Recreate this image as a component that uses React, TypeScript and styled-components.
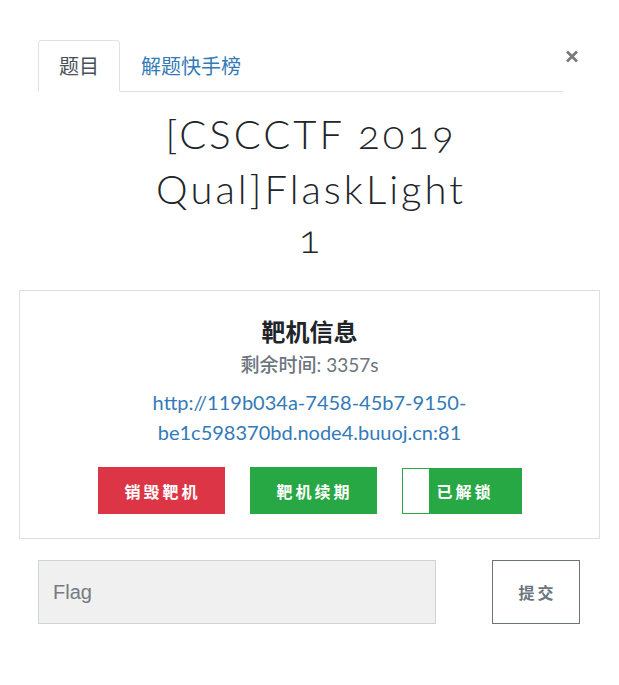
import { createGlobalStyle, styled } from 'styled-components';

const GlobalStyle = createGlobalStyle`
  * {
    box-sizing: border-box;
  }

  body {
    margin: 0;
    background: #fff;
    font-family: Lato, 'Noto Sans CJK SC', sans-serif;
    color: #212529;
  }
`;

const Modal = styled.div`
  width: 619px;
  padding-top: 40px;
  padding-bottom: 60px;
`;

const Header = styled.div`
  display: flex;
  align-items: flex-start;
  padding: 0 40px 0 38px;
`;

const Tabs = styled.div`
  flex: 1;
  display: flex;
  border-bottom: 1px solid #dee2e6;
`;

const Tab = styled.a<{ $active?: boolean }>`
  height: 52px;
  margin-bottom: -1px;
  padding: 0 20px;
  border: 1px solid transparent;
  border-radius: 4px 4px 0 0;
  font-size: 20px;
  line-height: 50px;
  text-decoration: none;
  cursor: pointer;
  color: ${p => (p.$active ? '#495057' : '#337ab7')};
  background: ${p => (p.$active ? '#fff' : 'transparent')};
  border-color: ${p => (p.$active ? '#dee2e6 #dee2e6 #fff' : 'transparent')};
`;

const Close = styled.button`
  display: flex;
  width: 14px;
  height: 13px;
  margin: 10px 0 0 2px;
  padding: 0;
  border: none;
  background: transparent;
  color: #7a7a7a;
  cursor: pointer;
`;

const Title = styled.h1`
  margin: 15px 0 0;
  padding: 0 37px 0 40px;
  font-size: 40px;
  font-weight: 300;
  line-height: 55px;
  letter-spacing: 3px;
  text-align: center;
  font-variant-numeric: oldstyle-nums;
`;

const Points = styled.div`
  padding-left: 3px;
  font-size: 40px;
  font-weight: 300;
  line-height: 42px;
  letter-spacing: 3px;
  text-align: center;
  font-variant-numeric: oldstyle-nums;
`;

const Card = styled.section`
  margin: 31px 19px 0;
  padding: 22px 20px 24px;
  border: 1px solid #dfdfdf;
  text-align: center;
`;

const CardTitle = styled.h4`
  margin: 0;
  font-size: 24px;
  font-weight: 700;
  line-height: 38px;
`;

const Timer = styled.div`
  font-size: 19px;
  line-height: 28px;
  color: #6c757d;
`;

const TimerLabel = styled.span`
  font-weight: 500;
`;

const Url = styled.a`
  display: block;
  margin-top: 8px;
  font-size: 20px;
  line-height: 30px;
  color: #337ab7;
  text-decoration: none;
`;

const Actions = styled.div`
  display: flex;
  justify-content: center;
  gap: 25px;
  margin-top: 20px;
`;

const ActionButton = styled.button<{ $tone: 'danger' | 'success' }>`
  width: 127px;
  height: 47px;
  padding: 0 0 0 3px;
  border: none;
  background: ${p => (p.$tone === 'danger' ? '#dc3545' : '#28a745')};
  color: #fff;
  font-family: inherit;
  font-size: 16px;
  font-weight: 700;
  letter-spacing: 3px;
  cursor: pointer;
`;

const LockButton = styled.button`
  display: flex;
  align-items: stretch;
  width: 120px;
  height: 46px;
  margin-top: 1px;
  padding: 0;
  border: 1px solid #28a745;
  background: #28a745;
  color: #fff;
  font-family: inherit;
  font-size: 16px;
  font-weight: 700;
  letter-spacing: 3px;
  cursor: pointer;
`;

const LockKnob = styled.span`
  width: 26px;
  background: #fff;
`;

const LockLabel = styled.span`
  display: flex;
  align-items: center;
  padding-left: 8px;
`;

const FlagForm = styled.form`
  display: flex;
  justify-content: space-between;
  margin-top: 21px;
  padding: 0 39px 0 38px;
`;

const FlagInput = styled.input`
  width: 398px;
  height: 64px;
  padding: 0 14px;
  border: 1px solid #ced4da;
  background: #f0f0f0;
  font-family: 'Liberation Sans', Arial, sans-serif;
  font-size: 20px;
  color: #495057;

  &::placeholder {
    color: #757b80;
  }

  &:focus {
    outline: none;
  }
`;

const SubmitButton = styled.button`
  width: 88px;
  height: 64px;
  padding: 0 0 0 3px;
  border: 1px solid #6c757d;
  background: #fff;
  color: #6c757d;
  font-family: inherit;
  font-size: 16px;
  font-weight: 700;
  letter-spacing: 3px;
  cursor: pointer;
`;

export default function App() {
  return (
    <>
      <GlobalStyle />
      <Modal>
        <Header>
          <Tabs>
            <Tab $active>题目</Tab>
            <Tab>解题快手榜</Tab>
          </Tabs>
          <Close aria-label="Close">
            <svg width="14" height="13" viewBox="0 0 14 13">
              <path d="M2 1.5 L12 11.5 M12 1.5 L2 11.5" stroke="currentColor" strokeWidth="2.8" strokeLinecap="butt" />
            </svg>
          </Close>
        </Header>

        <Title>[CSCCTF 2019 Qual]FlaskLight</Title>
        <Points>1</Points>

        <Card>
          <CardTitle>靶机信息</CardTitle>
          <Timer>
            <TimerLabel>剩余时间</TimerLabel>: 3357s
          </Timer>
          <Url href="#">http://119b034a-7458-45b7-9150-be1c598370bd.node4.buuoj.cn:81</Url>
          <Actions>
            <ActionButton $tone="danger">销毁靶机</ActionButton>
            <ActionButton $tone="success">靶机续期</ActionButton>
            <LockButton>
              <LockKnob />
              <LockLabel>已解锁</LockLabel>
            </LockButton>
          </Actions>
        </Card>

        <FlagForm onSubmit={e => e.preventDefault()}>
          <FlagInput placeholder="Flag" />
          <SubmitButton type="submit">提交</SubmitButton>
        </FlagForm>
      </Modal>
    </>
  );
}
